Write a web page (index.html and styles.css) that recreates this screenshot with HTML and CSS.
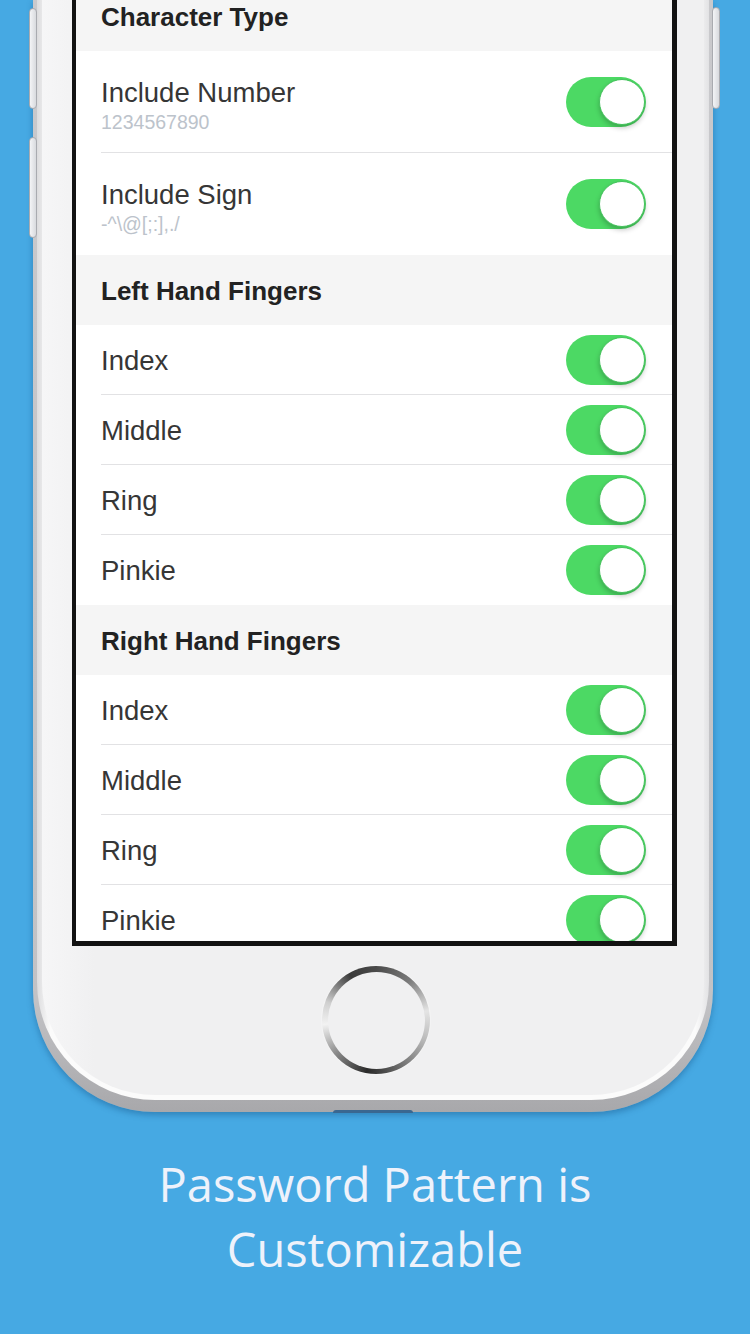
FILE: index.html
```html
<!DOCTYPE html>
<html lang="en">
<head>
<meta charset="utf-8">
<title>Password Pattern is Customizable</title>
<link rel="stylesheet" href="styles.css">
</head>
<body>
<div class="stage">
  <div class="phone">
    <span class="side-btn side-left-1"></span>
    <span class="side-btn side-left-2"></span>
    <span class="side-btn side-right-1"></span>
    <span class="bottom-port"></span>
    <div class="bezel">
      <div class="face">
        <div class="screen">
          <div class="list">
            <div class="section-header">Character Type</div>
            <div class="row">
              <div class="row-inner tall">
                <div class="labels">
                  <div class="title">Include Number</div>
                  <div class="subtitle">1234567890</div>
                </div>
                <div class="switch"><span class="knob"></span></div>
              </div>
            </div>
            <div class="row">
              <div class="row-inner tall last">
                <div class="labels">
                  <div class="title">Include Sign</div>
                  <div class="subtitle">-^\@[;:],./</div>
                </div>
                <div class="switch"><span class="knob"></span></div>
              </div>
            </div>

            <div class="section-header">Left Hand Fingers</div>
            <div class="row"><div class="row-inner"><div class="title">Index</div><div class="switch"><span class="knob"></span></div></div></div>
            <div class="row"><div class="row-inner"><div class="title">Middle</div><div class="switch"><span class="knob"></span></div></div></div>
            <div class="row"><div class="row-inner"><div class="title">Ring</div><div class="switch"><span class="knob"></span></div></div></div>
            <div class="row"><div class="row-inner last"><div class="title">Pinkie</div><div class="switch"><span class="knob"></span></div></div></div>

            <div class="section-header">Right Hand Fingers</div>
            <div class="row"><div class="row-inner"><div class="title">Index</div><div class="switch"><span class="knob"></span></div></div></div>
            <div class="row"><div class="row-inner"><div class="title">Middle</div><div class="switch"><span class="knob"></span></div></div></div>
            <div class="row"><div class="row-inner"><div class="title">Ring</div><div class="switch"><span class="knob"></span></div></div></div>
            <div class="row"><div class="row-inner last"><div class="title">Pinkie</div><div class="switch"><span class="knob"></span></div></div></div>
          </div>
        </div>
        <div class="home"><div class="home-inner"></div></div>
      </div>
    </div>
  </div>
  <p class="caption">Password Pattern is<br>Customizable</p>
</div>
</body>
</html>
```
FILE: styles.css
```css
html, body {
  margin: 0;
  padding: 0;
}
body {
  width: 750px;
  height: 1334px;
  overflow: hidden;
  background: #46a9e3;
  font-family: "Liberation Sans", Arial, sans-serif;
}
.stage {
  display: flex;
  flex-direction: column;
  width: 750px;
  height: 1334px;
}
.phone {
  position: relative;
  margin-left: 33px;
  width: 680px;
  height: 1112px;
  box-sizing: border-box;
  padding: 0 4px 12px 4px;
  border-radius: 0 0 122px 122px;
  background: linear-gradient(to bottom, #c9c9cc 0%, #c2c2c5 90%, #a8a8ab 100%);
  box-shadow: 0 3px 6px rgba(10, 60, 110, 0.35);
  flex-shrink: 0;
}
.side-btn {
  position: absolute;
  width: 6px;
  border: 1px solid #a9abb0;
  border-radius: 4px;
  background: linear-gradient(to right, #f3f4f6, #d8dade);
}
.side-left-1 { left: -4px; top: 8px; height: 99px; }
.side-left-2 { left: -4px; top: 137px; height: 99px; }
.side-right-1 { right: -7px; top: 7px; height: 100px; }
.bottom-port {
  position: absolute;
  left: 300px;
  bottom: -1px;
  width: 80px;
  height: 3px;
  border-radius: 3px 3px 0 0;
  background: #3a6790;
}
.bezel {
  height: 100%;
  box-sizing: border-box;
  padding: 0 5px 5px 5px;
  border-radius: 0 0 118px 118px;
  background: linear-gradient(to right, #dcdcde 0%, #fbfbfb 2%, #fbfbfb 98%, #e2e2e4 100%);
}
.face {
  height: 100%;
  display: flex;
  flex-direction: column;
  align-items: flex-start;
  border-radius: 0 0 113px 113px;
  background: linear-gradient(to right, #f6f6f7 0%, #f0f0f1 8%, #f0f0f1 100%);
}
.screen {
  margin-left: 30px;
  width: 605px;
  height: 946px;
  box-sizing: border-box;
  border-style: solid;
  border-color: #121212;
  border-width: 0 5px 5px 4px;
  background: #ffffff;
  overflow: hidden;
}
.list {
  margin-top: -19px;
  display: flex;
  flex-direction: column;
}
.section-header {
  height: 70px;
  flex-shrink: 0;
  display: flex;
  align-items: center;
  padding-left: 25px;
  padding-top: 2px;
  box-sizing: border-box;
  background: #f5f5f5;
  color: #222222;
  font-size: 26px;
  font-weight: bold;
}
.row {
  background: #ffffff;
  padding-left: 25px;
  flex-shrink: 0;
}
.row-inner {
  height: 70px;
  box-sizing: border-box;
  display: flex;
  align-items: center;
  justify-content: space-between;
  padding-right: 26px;
  border-bottom: 1px solid #e2e2e4;
}
.row-inner.tall {
  height: 102px;
}
.row-inner.last {
  border-bottom: none;
}
.row-inner > .title {
  padding-top: 2px;
}
.labels {
  display: flex;
  flex-direction: column;
  padding-top: 6px;
}
.title {
  font-size: 27.5px;
  line-height: 32px;
  color: #363636;
}
.subtitle {
  margin-top: 2px;
  font-size: 19.5px;
  line-height: 22px;
  color: #bcc3cb;
}
.switch {
  width: 80px;
  height: 50px;
  box-sizing: border-box;
  border-radius: 25px;
  background: #4cd964;
  display: flex;
  align-items: center;
  justify-content: flex-end;
  padding-right: 1px;
}
.knob {
  width: 46px;
  height: 46px;
  box-sizing: border-box;
  border-radius: 50%;
  background: #ffffff;
  border: 1px solid #44c25c;
  box-shadow: 0 3px 5px rgba(0, 0, 0, 0.22);
}
.home {
  margin-top: 20px;
  align-self: center;
  margin-left: 6px;
  width: 108px;
  height: 108px;
  border-radius: 50%;
  background: conic-gradient(from 0deg,
    #4a4a4a 0deg, #7a7a7a 40deg, #e4e4e4 80deg, #bdbdbd 110deg,
    #4c4c4c 170deg, #2a2a2a 190deg, #8a8a8a 230deg, #f2f2f2 265deg,
    #cfcfcf 290deg, #3a3a3a 330deg, #4a4a4a 360deg);
  display: flex;
  align-items: center;
  justify-content: center;
  box-shadow: 0 0 2px rgba(255, 255, 255, 0.9);
}
.home-inner {
  width: 97px;
  height: 97px;
  border-radius: 50%;
  background: #f0f0f1;
}
.caption {
  margin: 40px 0 0 0;
  text-align: center;
  font-family: "Open Sans", "Noto Sans", sans-serif;
  font-size: 47px;
  line-height: 65px;
  color: #eef2fb;
}
```
